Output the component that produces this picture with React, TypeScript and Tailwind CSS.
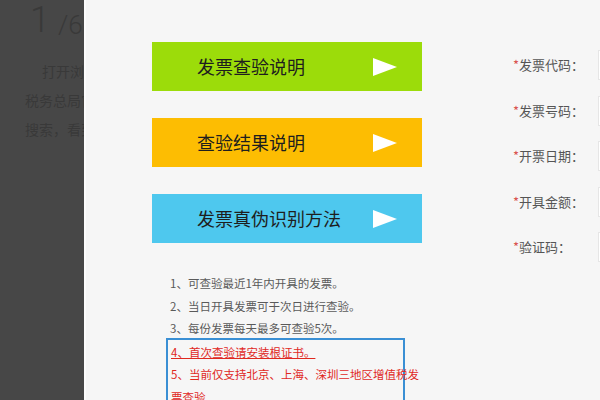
import React from "react";

const buttons = [
  { label: "发票查验说明", bg: "bg-[#9cdc0a]" },
  { label: "查验结果说明", bg: "bg-[#fdbd02]" },
  { label: "发票真伪识别方法", bg: "bg-[#4ec8ee]" },
];

const fields = ["发票代码：", "发票号码：", "开票日期：", "开具金额：", "验证码："];

function Arrow() {
  return (
    <svg width="24" height="18" viewBox="0 0 24 18" className="shrink-0">
      <polygon points="0,0 24,9 0,18" fill="#ffffff" />
    </svg>
  );
}

export default function App() {
  return (
    <div
      className="flex h-[400px] w-[600px] overflow-hidden"
      style={{ fontFamily: '"Noto Sans CJK SC", "Noto Sans", sans-serif' }}
    >
      {/* dimmed page behind the dialog */}
      <div className="w-[84px] shrink-0 overflow-hidden bg-[#474747] text-[#393939]">
        <div className="w-[300px]">
          <div className="flex h-[38px] items-end pl-[30px] pt-[2px] font-['Roboto',sans-serif]">
            <span className="text-[36px] font-light leading-none">1</span>
            <span className="ml-[8px] text-[26px] font-light leading-none">/6</span>
          </div>
          <div className="mt-[19px] pl-[42px] text-[14px] leading-[29px]">打开浏览器</div>
          <div className="pl-[25px] text-[14px] leading-[29px]">税务总局官网</div>
          <div className="pl-[25px] text-[14px] leading-[29px]">搜索，看到</div>
        </div>
      </div>
      <div className="w-[2px] shrink-0 bg-[#fcfcfc]" />

      {/* dialog */}
      <div className="flex flex-1 overflow-hidden bg-[#f6f6f6] pl-[66px] pt-[42px]">
        <div className="w-[270px] shrink-0">
          <div className="flex flex-col gap-[27px]">
            {buttons.map((b) => (
              <div
                key={b.label}
                className={`flex h-[49px] items-center justify-between pl-[45px] pr-[25px] ${b.bg}`}
              >
                <span className="text-[18px] text-[#1e1e1e]">{b.label}</span>
                <Arrow />
              </div>
            ))}
          </div>

          <div className="mt-[29px] text-[11.5px] leading-[22.5px] text-[#5a5a5a]">
            <div className="pl-[18px]">1、可查验最近1年内开具的发票。</div>
            <div className="pl-[18px]">2、当日开具发票可于次日进行查验。</div>
            <div className="pl-[18px]">3、每份发票每天最多可查验5次。</div>
            <div className="-mt-[2px] ml-[14px] w-[239px] border-2 border-[#3a8fd4] pl-[3px] pt-[1px] text-[#e0281e]">
              <div className="underline">4、首次查验请安装根证书。</div>
              <div className="whitespace-nowrap">
                5、当前仅支持北京、上海、深圳三地区增值税发
                <br />
                票查验
              </div>
            </div>
          </div>
        </div>

        <div className="ml-[91px] flex shrink-0 flex-col gap-[15.5px] pt-[8px]">
          {fields.map((f) => (
            <div key={f} className="flex h-[30px] items-center">
              <span className="w-[85px] shrink-0 text-[13px] text-[#555555]">
                <span className="text-[#d9534f]">*</span>
                {f}
              </span>
              <div className="h-[30px] w-[200px] border border-[#e6e6e6] bg-white" />
            </div>
          ))}
        </div>
      </div>
    </div>
  );
}
